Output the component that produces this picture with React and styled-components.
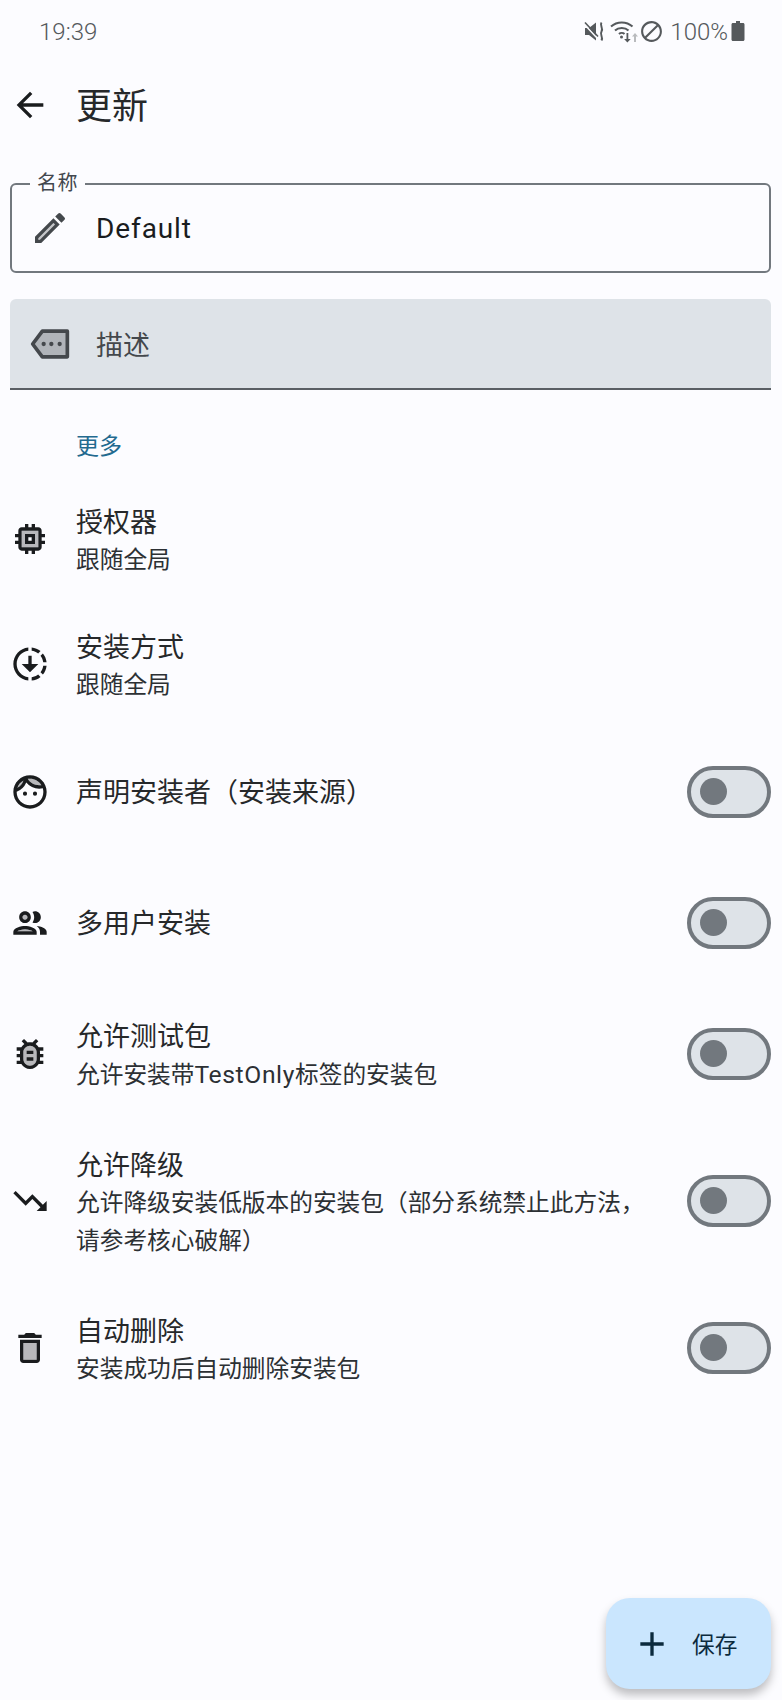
import React from "react";
import styled, { createGlobalStyle } from "styled-components";

const GlobalStyle = createGlobalStyle`
  body {
    margin: 0;
    background: #fcfcff;
    font-family: Roboto, "Noto Sans CJK SC", sans-serif;
  }
`;

const Page = styled.div`
  position: relative;
  width: 782px;
  height: 1700px;
  overflow: hidden;
  background: #fcfcff;
`;

const StatusBar = styled.div`
  height: 62px;
  padding: 0 37px 0 39px;
  display: flex;
  align-items: center;
  justify-content: space-between;
  color: #55595c;
  font-size: 24px;
  font-weight: 300;
`;

const Clock = styled.span`
  padding-top: 2px;
`;

const StatusIcons = styled.div`
  display: flex;
  align-items: center;
`;

const Percent = styled.span`
  padding: 2px 3px 0 6px;
`;

const TopBar = styled.div`
  height: 86px;
  padding-left: 10px;
  display: flex;
  align-items: center;
  gap: 26px;
`;

const Title = styled.div`
  margin-bottom: 4px;
  font-size: 36px;
  color: #26282a;
`;

const Fields = styled.div`
  padding: 35px 11px 0 10px;
  display: flex;
  flex-direction: column;
  gap: 26px;
`;

const OutlinedField = styled.div`
  position: relative;
  height: 90px;
  box-sizing: border-box;
  padding-left: 18px;
  display: flex;
  align-items: center;
  gap: 26px;
  border: 2px solid #72787e;
  border-radius: 6px;
  color: #1a1c1e;
  font-size: 28px;
  letter-spacing: 0.9px;
`;

const FieldLabel = styled.span`
  position: absolute;
  left: 18px;
  top: -14px;
  padding: 0 7px;
  background: #fcfcff;
  color: #42474e;
  font-size: 20px;
  line-height: 24px;
  letter-spacing: 0.5px;
`;

const FilledField = styled.div`
  height: 91px;
  box-sizing: border-box;
  padding-left: 20px;
  display: flex;
  align-items: center;
  gap: 26px;
  background: #dee3e8;
  border-bottom: 2px solid #5a5f64;
  border-radius: 6px 6px 0 0;
  color: #44484c;
  font-size: 27px;
`;

const SectionLabel = styled.div`
  padding: 43px 0 0 76px;
  height: 86px;
  box-sizing: border-box;
  color: #236a8f;
  font-size: 23px;
  line-height: 28px;
`;

const Row = styled.div`
  min-height: ${(p) => (p.$toggle ? "131px" : "124px")};
  box-sizing: border-box;
  padding: ${(p) => (p.$toggle ? "22px" : "21.75px")} 11px ${(p) => (p.$toggle ? "22px" : "21.75px")} 10px;
  display: flex;
  align-items: center;
  gap: 26px;
`;

const RowText = styled.div`
  flex: 1;
  min-width: 0;
  padding-top: ${(p) => (p.$hasSub ? "6px" : "3px")};
  margin-right: ${(p) => (p.$toggle ? "12px" : "0")};
  color: #26282a;
`;

const RowTitle = styled.div`
  font-size: 27px;
  line-height: 38px;
`;

const RowSub = styled.div`
  font-size: 23.7px;
  line-height: 37.5px;
  color: #2c3034;
`;

const Latin = styled.span`
  font-size: 24.7px;
  letter-spacing: 0.6px;
`;

const Icon = styled.svg`
  flex: none;
  width: 40px;
  height: 40px;
  fill: ${(p) => p.$color || "#1a1c1e"};
`;

const SmallIcon = styled.svg`
  flex: none;
  display: block;
  width: ${(p) => p.$w || p.$size}px;
  height: ${(p) => p.$size}px;
  margin-right: ${(p) => p.$gap || 0}px;
  fill: #55595c;
`;

const Toggle = styled.div`
  flex: none;
  width: 84px;
  height: 52px;
  box-sizing: border-box;
  padding-left: 9px;
  display: flex;
  align-items: center;
  background: #dee3e8;
  border: 4px solid #72787e;
  border-radius: 26px;
`;

const Thumb = styled.div`
  width: 27px;
  height: 27px;
  border-radius: 50%;
  background: #72787e;
`;

const Fab = styled.div`
  position: absolute;
  left: 606px;
  top: 1598px;
  width: 165px;
  height: 91px;
  box-sizing: border-box;
  padding-left: 26px;
  display: flex;
  align-items: center;
  gap: 20px;
  background: #cae6fe;
  border-radius: 24px;
  box-shadow: 0 6px 10px rgba(0, 0, 0, 0.25);
  color: #0b2a3d;
  font-size: 22.7px;
`;

const tone = 0.3;

const icons = {
  memory: (
    <>
      <path opacity={tone} d="M7 17h10V7H7v10zm2-8h6v6H9V9z" />
      <path d="M15 9H9v6h6V9zm-2 4h-2v-2h2v2zm8-2V9h-2V7c0-1.1-.9-2-2-2h-2V3h-2v2h-2V3H9v2H7c-1.1 0-2 .9-2 2v2H3v2h2v2H3v2h2v2c0 1.1.9 2 2 2h2v2h2v-2h2v2h2v-2h2c1.1 0 2-.9 2-2v-2h2v-2h-2v-2h2zm-4 6H7V7h10v10z" />
    </>
  ),
  downloading: (
    <path d="M18.32 4.26C16.84 3.05 15.01 2.25 13 2.05v2.02c1.46.18 2.79.76 3.9 1.62l1.42-1.43zM19.93 11h2.02c-.2-2.01-1-3.84-2.21-5.32L18.31 7.1c.86 1.11 1.44 2.44 1.62 3.9zm-1.62 5.9l1.43 1.43c1.21-1.48 2.01-3.32 2.21-5.32h-2.02c-.18 1.45-.76 2.78-1.62 3.89zM13 19.93v2.02c2.01-.2 3.84-1 5.32-2.21l-1.43-1.43c-1.1.86-2.43 1.44-3.89 1.62zM13 12V7h-2v5H7l5 5 5-5h-4zm-2 7.93v2.02c-5.05-.5-9-4.76-9-9.95s3.95-9.45 9-9.95v2.02C7.05 4.56 4 7.92 4 12s3.05 7.44 7 7.93z" />
  ),
  face: (
    <>
      <path opacity={tone} d="M17.5 8c.46 0 .91-.05 1.34-.12C17.44 5.56 14.9 4 12 4c-.46 0-.91.05-1.34.12C12.06 6.44 14.6 8 17.5 8zM8.08 5.03C6.37 6 5.05 7.58 4.42 9.47c1.71-.97 3.03-2.55 3.66-4.44z" />
      <path d="M10.25 13a1.25 1.25 0 1 1-2.5 0 1.25 1.25 0 0 1 2.5 0zM15 11.75a1.25 1.25 0 1 0 0 2.5 1.25 1.25 0 0 0 0-2.5zm7 .25c0 5.52-4.48 10-10 10S2 17.52 2 12 6.48 2 12 2s10 4.48 10 10zM10.66 4.12C12.06 6.44 14.6 8 17.5 8c.46 0 .91-.05 1.34-.12C17.44 5.56 14.9 4 12 4c-.46 0-.91.05-1.34.12zM4.42 9.47a8.046 8.046 0 0 0 3.66-4.44 8.046 8.046 0 0 0-3.66 4.44zM20 12c0-.78-.12-1.53-.33-2.24-.7.15-1.42.24-2.17.24a10 10 0 0 1-7.74-3.67A10.02 10.02 0 0 1 4 11.86c.01.04 0 .09 0 .14 0 4.41 3.59 8 8 8s8-3.59 8-8z" />
    </>
  ),
  people: (
    <>
      <path opacity={tone} d="M9 15.75c-1.79 0-3.82.67-4.66 1.25h9.32c-.84-.58-2.87-1.25-4.66-1.25zM9 7a1.5 1.5 0 1 0 0 3 1.5 1.5 0 0 0 0-3z" />
      <path d="M9 13.75c-2.34 0-7 1.17-7 3.5V19h14v-1.75c0-2.33-4.66-3.5-7-3.5zM4.34 17c.84-.58 2.87-1.25 4.66-1.25s3.82.67 4.66 1.25H4.34zM9 12c1.93 0 3.5-1.57 3.5-3.5S10.93 5 9 5 5.5 6.57 5.5 8.5 7.07 12 9 12zm0-5c.83 0 1.5.67 1.5 1.5S9.83 10 9 10s-1.5-.67-1.5-1.5S8.17 7 9 7zm7.04 6.81c1.16.84 1.96 1.96 1.96 3.44V19h4v-1.75c0-2.02-3.5-3.17-5.96-3.44zM15 12c1.93 0 3.5-1.57 3.5-3.5S16.93 5 15 5c-.54 0-1.04.13-1.5.35.63.89 1 1.98 1 3.15s-.37 2.26-1 3.15c.46.22.96.35 1.5.35z" />
    </>
  ),
  bug: (
    <>
      <path opacity={tone} d="M12 7c-2.21 0-4 1.79-4 4v4c0 2.21 1.79 4 4 4s4-1.79 4-4v-4c0-2.21-1.79-4-4-4z" />
      <path d="M20 8h-2.81c-.45-.78-1.07-1.45-1.82-1.96L17 4.41 15.59 3l-2.17 2.17C12.96 5.06 12.49 5 12 5c-.49 0-.96.06-1.41.17L8.41 3 7 4.41l1.62 1.63C7.88 6.55 7.26 7.22 6.81 8H4v2h2.09c-.05.33-.09.66-.09 1v1H4v2h2v1c0 .34.04.67.09 1H4v2h2.81c1.04 1.79 2.97 3 5.19 3s4.15-1.21 5.19-3H20v-2h-2.09c.05-.33.09-.66.09-1v-1h2v-2h-2v-1c0-.34-.04-.67-.09-1H20V8zm-4 7c0 2.21-1.79 4-4 4s-4-1.79-4-4v-4c0-2.21 1.79-4 4-4s4 1.79 4 4v4zm-6-1h4v2h-4zm0-4h4v2h-4z" />
    </>
  ),
  trending: <path d="M16 18l2.29-2.29-4.88-4.88-4 4L2 7.41 3.41 6l6 6 4-4 6.3 6.29L22 12v6z" />,
  trash: (
    <>
      <path opacity={tone} d="M8 9h8v10H8z" />
      <path d="M15.5 4l-1-1h-5l-1 1H5v2h14V4zM6 19c0 1.1.9 2 2 2h8c1.1 0 2-.9 2-2V7H6v12zM8 9h8v10H8V9z" />
    </>
  ),
};

const rows = [
  { icon: "memory", title: "授权器", sub: "跟随全局" },
  { icon: "downloading", title: "安装方式", sub: "跟随全局" },
  { icon: "face", title: "声明安装者（安装来源）", toggle: true },
  { icon: "people", title: "多用户安装", toggle: true },
  {
    icon: "bug",
    title: "允许测试包",
    sub: (
      <>
        允许安装带<Latin>TestOnly</Latin>标签的安装包
      </>
    ),
    toggle: true,
  },
  {
    icon: "trending",
    title: "允许降级",
    sub: "允许降级安装低版本的安装包（部分系统禁止此方法，请参考核心破解）",
    toggle: true,
  },
  { icon: "trash", title: "自动删除", sub: "安装成功后自动删除安装包", toggle: true },
];

function StatusGlyphs() {
  return (
    <StatusIcons>
      <SmallIcon $size={24} $gap={3} viewBox="0 0 24 24">
        <path d="M3 9h4l7-5.500v18L7 16H3z" />
        <path d="M2 5l14 15" stroke="#fcfcff" strokeWidth="1.600" />
        <path d="M3 3.500l13 14" stroke="#55595c" strokeWidth="1.600" />
        <path d="M19.500 3.500c-2.200 3 2.200 5.500 0 9s2.200 5.500 0 9" fill="none" stroke="#55595c" strokeWidth="2" />
      </SmallIcon>
      <SmallIcon $size={30} viewBox="0 0 30 30">
        <path d="M2 10.500C8 5 17.500 5 23.500 10.500" fill="none" stroke="#55595c" strokeWidth="2" />
        <path d="M6 14.500c3.500-3.500 10-3.500 13.500 0" fill="none" stroke="#55595c" strokeWidth="2" />
        <path d="M10 18c1.500-1.500 4-1.500 5.500 0" fill="none" stroke="#55595c" strokeWidth="2" />
        <path d="M17.500 17h1.800v6h2.400l-3.300 3.500-3.300-3.500h2.400z" />
        <circle cx="12.500" cy="21" r="1.500" />
        <path d="M26 17l3 3.500h-2V26h-2v-5.500h-2z" opacity="0.4" />
      </SmallIcon>
      <SmallIcon $size={25} viewBox="0 0 24 24">
        <path d="M12 2C6.480 2 2 6.480 2 12s4.480 10 10 10 10-4.480 10-10S17.520 2 12 2zM4 12c0-4.420 3.580-8 8-8 1.850 0 3.550.630 4.900 1.690L5.690 16.900A7.902 7.902 0 0 1 4 12zm8 8c-1.850 0-3.550-.630-4.900-1.690L18.310 7.100A7.902 7.902 0 0 1 20 12c0 4.420-3.580 8-8 8z" />
      </SmallIcon>
      <Percent>100%</Percent>
      <SmallIcon $size={24} $w={14} viewBox="5 0 14 24">
        <path d="M17 4h-3V2h-4v2H7c-.9 0-1.500.6-1.500 1.500v15c0 .9.6 1.500 1.500 1.500h10c.9 0 1.500-.6 1.500-1.500v-15C18.500 4.600 17.900 4 17 4z" />
      </SmallIcon>
    </StatusIcons>
  );
}

export default function App() {
  return (
    <Page>
      <GlobalStyle />
      <StatusBar>
        <Clock>19:39</Clock>
        <StatusGlyphs />
      </StatusBar>
      <TopBar>
        <Icon viewBox="0 0 24 24">
          <path d="M20 11H7.830l5.590-5.590L12 4l-8 8 8 8 1.410-1.410L7.830 13H20v-2z" />
        </Icon>
        <Title>更新</Title>
      </TopBar>
      <Fields>
        <OutlinedField>
          <FieldLabel>名称</FieldLabel>
          <Icon $color="#44484c" viewBox="0 0 24 24">
            <path opacity={tone} d="M5 18.080V19h.92l9.060-9.060-.92-.92z" />
            <path d="M20.710 7.040a.996.996 0 0 0 0-1.410l-2.340-2.340a.996.996 0 0 0-1.410 0l-1.830 1.830 3.750 3.750 1.830-1.830zM3 17.250V21h3.750L17.810 9.940l-3.750-3.750L3 17.250zM5.920 19H5v-.92l9.060-9.060.92.92L5.920 19z" />
          </Icon>
          Default
        </OutlinedField>
        <FilledField>
          <Icon $color="#44484c" viewBox="0 0 24 24">
            <path
              fillOpacity={tone}
              stroke="#44484c"
              strokeWidth="2.200"
              strokeLinejoin="round"
              d="M22.400 4.300H7.400L1.600 12l5.800 7.700h15z"
            />
            <circle cx="8.200" cy="12" r="1.300" />
            <circle cx="12.800" cy="12" r="1.300" />
            <circle cx="17.800" cy="12" r="1.300" />
          </Icon>
          描述
        </FilledField>
      </Fields>
      <SectionLabel>更多</SectionLabel>
      {rows.map((row) => (
        <Row key={row.title} $toggle={row.toggle}>
          <Icon viewBox="0 0 24 24">{icons[row.icon]}</Icon>
          <RowText $toggle={row.toggle} $hasSub={!!row.sub}>
            <RowTitle>{row.title}</RowTitle>
            {row.sub && <RowSub>{row.sub}</RowSub>}
          </RowText>
          {row.toggle && (
            <Toggle>
              <Thumb />
            </Toggle>
          )}
        </Row>
      ))}
      <Fab>
        <Icon viewBox="0 0 24 24" $color="#0b2a3d">
          <path d="M19 13h-6v6h-2v-6H5v-2h6V5h2v6h6v2z" />
        </Icon>
        保存
      </Fab>
    </Page>
  );
}
